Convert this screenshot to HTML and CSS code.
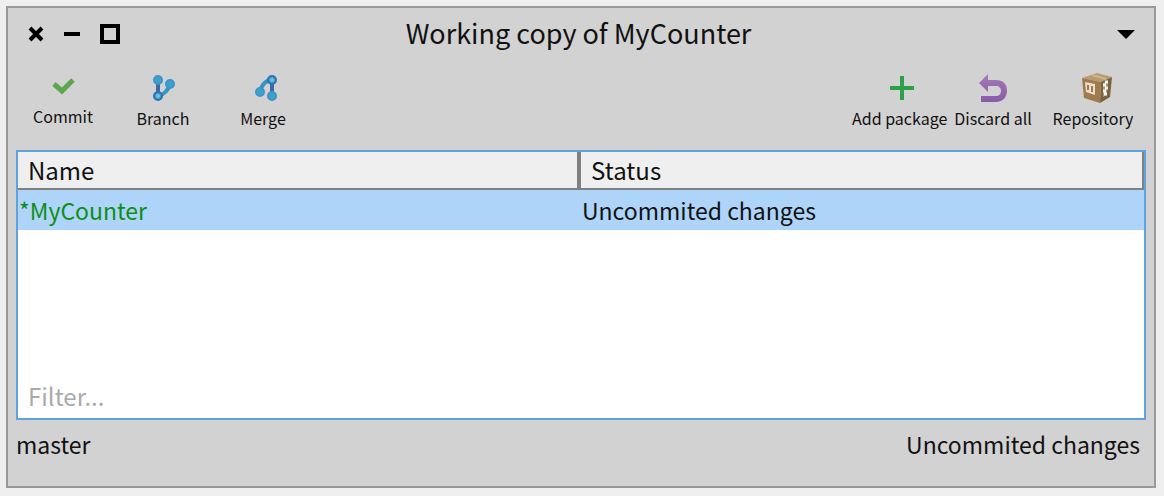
FILE: index.html
```html
<!DOCTYPE html>
<html lang="en">
<head>
<meta charset="utf-8">
<title>Working copy of MyCounter</title>
<link rel="stylesheet" href="styles.css">
</head>
<body>
<main class="window">
  <header class="titlebar">
    <div class="controls">
      <button class="control" aria-label="Close"><svg width="16" height="16" viewBox="0 0 16 16"><path d="M2 2l12 12M14 2L2 14" stroke="#000" stroke-width="4"/></svg></button>
      <button class="control" aria-label="Minimize"><svg width="16" height="16" viewBox="0 0 16 16"><path d="M0 6h16v4H0z"/></svg></button>
      <button class="control" aria-label="Maximize"><svg width="20" height="20" viewBox="0 0 20 20"><path d="M2 2h16v16H2z" fill="none" stroke="#000" stroke-width="4"/></svg></button>
    </div>
    <h1 class="title">Working copy of MyCounter</h1>
    <button class="control menu" aria-label="Window menu"><svg width="18" height="10" viewBox="0 0 18 10"><path d="M0 1h18L9 10z"/></svg></button>
  </header>

  <nav class="toolbar" aria-label="Actions">
    <div class="group">
      <button class="tool tool-commit">
        <svg class="icon" viewBox="0 0 30 28"><path d="M6 11l8 7L25 7" fill="none" stroke="#5fa550" stroke-width="5"/></svg>
        <span class="label">Commit</span>
      </button>
      <button class="tool">
        <svg class="icon" viewBox="0 0 30 30"><path d="M10 7v16" stroke="#3b6aa5" stroke-width="4"/><path d="M10 23q9-2 12-12" fill="none" stroke="#3494c4" stroke-width="4"/><g fill="#35a5cf" stroke="#4292c7" stroke-width="2"><circle cx="10" cy="7" r="4"/><circle cx="22" cy="11" r="4"/><circle cx="10" cy="23" r="4" stroke="#3272ae"/></g><circle cx="10" cy="23" r="2" fill="#74bddd"/></svg>
        <span class="label">Branch</span>
      </button>
      <button class="tool">
        <svg class="icon" viewBox="0 0 30 30"><path d="M24 7v16" stroke="#3b6aa5" stroke-width="4"/><path d="M24 7Q15 7 12 19" fill="none" stroke="#3494c4" stroke-width="4"/><g fill="#35a5cf" stroke="#4292c7" stroke-width="2"><circle cx="24" cy="23" r="4"/><circle cx="12" cy="19" r="4"/><circle cx="24" cy="7" r="4" stroke="#3272ae"/></g><circle cx="24" cy="7" r="2" fill="#74bddd"/></svg>
        <span class="label">Merge</span>
      </button>
    </div>
    <div class="group group-end">
      <button class="tool">
        <svg class="icon" viewBox="0 0 30 30"><path d="M15 3v24M3 15h24" stroke="#2ca049" stroke-width="4"/></svg>
        <span class="label label-start">Add package</span>
      </button>
      <button class="tool">
        <svg class="icon" viewBox="0 0 30 30"><defs><linearGradient id="undo" x1="0" y1="0" x2="0" y2="1"><stop offset="0" stop-color="#a679bb"/><stop offset="1" stop-color="#8a5ba5"/></linearGradient></defs><path d="M1 10l9-9v6h8c7 0 11 4 11 10.500S25 29 18 29H3v-6h15c3 0 5-2 5-5s-2-5-5-5h-8v6z" fill="url(#undo)"/></svg>
        <span class="label">Discard all</span>
      </button>
      <button class="tool">
        <svg class="icon icon-box" viewBox="0 0 30 30"><path d="M0 5L15 0l15 4-11 5z" fill="#b99b70"/><path d="M0 5l19 4-1 21L2 25z" fill="#a07a4b"/><path d="M19 9l11-5-2 20-10 6z" fill="#796240"/><path d="M10 2l14 4" stroke="#d0b58d" stroke-width="2"/><path d="M3 9l10 2v11l-9-3z" fill="#e8dfd0"/><path d="M6 12v5M10 13v6" stroke="#a07a4b" stroke-width="2"/><path d="M21 10l5-3-1 15-4 2z" fill="#a89b82"/><path d="M23 9h3m-5 3h3m-1 3h3m-5 3h3m-2 3h3" stroke="#f4f1eb" stroke-width="3"/></svg>
        <span class="label">Repository</span>
      </button>
    </div>
  </nav>

  <section class="panel">
    <table class="packages">
      <thead><tr><th scope="col">Name</th><th scope="col">Status</th></tr></thead>
      <tbody><tr class="selected"><td class="changed">*MyCounter</td><td>Uncommited changes</td></tr></tbody>
    </table>
    <input class="filter" type="text" aria-label="Filter" placeholder="Filter...">
  </section>

  <footer class="status">
    <span>master</span>
    <span>Uncommited changes</span>
  </footer>
</main>
</body>
</html>
```
FILE: styles.css
```css
* { box-sizing: border-box; }

body {
  margin: 0;
  height: 100vh;
  display: flex;
  padding: 6px 8px 8px 6px;
  background: #efefef;
  color: #111;
  font: 24px/38px "Noto Sans CJK SC", "Noto Sans", sans-serif;
}

button, input { font: inherit; color: inherit; }

button {
  padding: 0;
  border: 0;
  background: none;
}

.window {
  flex: 1;
  display: flex;
  flex-direction: column;
  border: 2px solid #999;
  background: #d2d2d2;
}

.titlebar {
  display: grid;
  grid-template-columns: 1fr auto 1fr;
  align-items: center;
  height: 52px;
  padding: 0 19px 0 20px;
}

.controls { display: flex; align-items: center; gap: 20px; }
.control { display: flex; }
.menu { justify-self: end; }

.title {
  margin: 0;
  padding: 0 6px 2px 0;
  font-size: 27px;
  font-weight: 400;
}

.toolbar {
  display: flex;
  justify-content: space-between;
  height: 90px;
  padding: 13px 2px 0 5px;
  font-size: 16px;
  line-height: 30px;
}

.group {
  display: grid;
  grid-template-columns: repeat(3, 100px);
  align-items: start;
}

.group-end { grid-template-columns: 100px 82px 118px; }

.tool {
  display: flex;
  flex-direction: column;
  align-items: center;
  white-space: nowrap;
}

.icon { width: 30px; height: 30px; }
.icon-box { margin-left: 8px; }
.tool-commit .icon { height: 28px; }
.label-start { align-self: flex-start; }

.panel {
  flex: 1;
  display: flex;
  flex-direction: column;
  justify-content: space-between;
  margin: 0 8px;
  border: 2px solid #5ea2e0;
  background: #fff;
}

.packages {
  width: 100%;
  table-layout: fixed;
  border-spacing: 0;
}

.packages th {
  height: 38px;
  padding: 0 10px;
  border: 0 solid #808080;
  border-width: 0 2px 2px 0;
  background: #efefef;
  font-weight: 400;
  line-height: 36px;
  text-align: left;
}

.packages th:first-child { border-right-width: 4px; }

.packages td {
  height: 40px;
  padding: 0 1px;
  font-size: 23px;
}

.selected { background: #aed4fa; }
.changed { color: #0c8f14; }

.filter {
  width: 100%;
  height: 42px;
  padding: 0 10px 4px;
  border: 0;
  outline: 0;
  background: transparent;
}

.filter::placeholder { color: #aaa; opacity: 1; }

.status {
  display: flex;
  justify-content: space-between;
  height: 66px;
  padding: 5px 14px 0 8px;
  font-size: 23px;
}
```
